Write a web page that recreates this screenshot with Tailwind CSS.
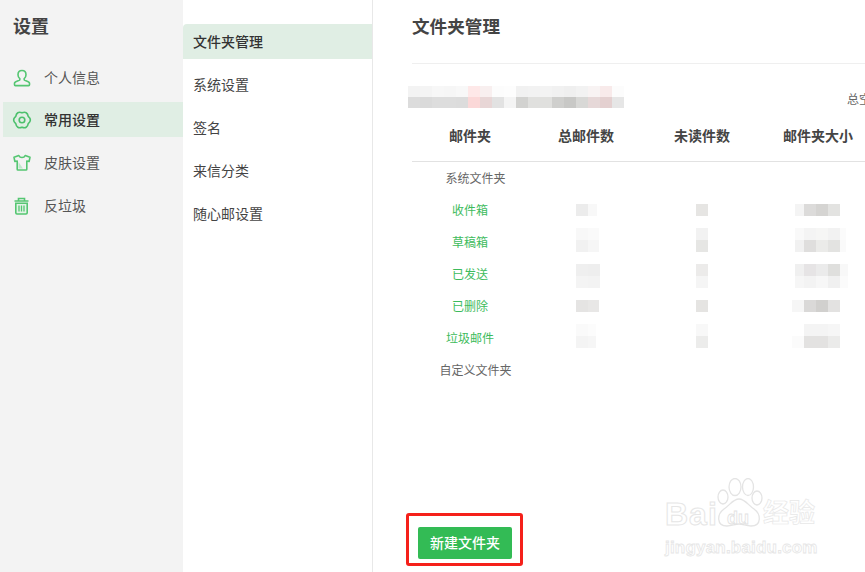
<!DOCTYPE html>
<html lang="zh-CN">
<head>
  <meta charset="UTF-8" />
  <title>设置</title>
  <script src="https://cdn.jsdelivr.net/npm/@tailwindcss/browser@4"></script>
</head>
<body class="h-[572px] w-[865px] overflow-hidden bg-white font-['Liberation_Sans','Noto_Sans_CJK_SC',sans-serif] text-[#333]">
  <div class="relative flex h-full">

    <!-- left nav -->
    <aside class="h-full w-[183px] shrink-0 bg-[#f3f3f3] pl-[3px]">
      <h1 class="h-[60px] pl-[10px] pt-[15px] text-[18px] leading-6 font-bold text-[#444]">设置</h1>
      <ul class="text-[14px] text-[#555]">
        <li class="flex h-[35px] items-center gap-[13px] pl-[10px]">
          <svg class="h-[18px] w-[18px]" viewBox="0 0 18 18" fill="none" stroke="#55c672" stroke-width="1.6"><path d="M9 1.500c-2.500 0-4 1.800-4 4.200 0 1.800.8 3.200 1.800 4v1.300c0 .8-5.300 1.200-5.300 3.300v1.500a.8.8 0 0 0 .8.8h13.400a.8.8 0 0 0 .8-.8V14.300c0-2.100-5.300-2.500-5.300-3.300V9.700c1-.8 1.800-2.200 1.800-4 0-2.400-1.500-4.200-4-4.200z"/></svg>
          <span class="pt-[2px]">个人信息</span>
        </li>
        <li class="mt-[7px] flex h-[35px] items-center gap-[13px] bg-[#e0eee4] pl-[10px] font-medium text-[#333]">
          <svg class="h-[18px] w-[18px] overflow-visible" viewBox="0 0 18 18" fill="none" stroke="#4cc06c" stroke-width="1.6"><path d="M15.240 5.400Q14.250-.09 9 1.800 3.750-.09 2.760 5.400-1.500 9 2.760 12.600 3.750 18.090 9 16.200 14.250 18.090 15.240 12.600 19.500 9 15.240 5.400z"/><circle cx="9" cy="9" r="2.800"/></svg>
          <span class="pt-[2px]">常用设置</span>
        </li>
        <li class="mt-[8px] flex h-[35px] items-center gap-[13px] pl-[10px]">
          <svg class="h-[18px] w-[18px]" viewBox="0 0 18 18" fill="none" stroke="#55c672" stroke-width="1.6"><path d="M5.800 1.500 1 3.300l.9 4.200 2.300-.5v8.200a.8.8 0 0 0 .8.8h8a.8.8 0 0 0 .8-.8V7l2.300.5.900-4.200-4.800-1.800C11 4.200 7 4.200 5.800 1.500z" stroke-linejoin="round"/><path d="M5.500 8v6.500h4.500z" fill="#bfe8cb" stroke="none"/></svg>
          <span class="pt-[2px]">皮肤设置</span>
        </li>
        <li class="mt-[8px] flex h-[35px] items-center gap-[13px] pl-[10px]">
          <svg class="h-[18px] w-[18px]" viewBox="0 0 18 18" fill="none" stroke="#55c672" stroke-width="1.6"><path d="M1.500 4h14M5.500 3.700V1.500h6v2.200"/><path d="M2.800 6.300v9.500a1.200 1.200 0 0 0 1.200 1.200h9a1.200 1.200 0 0 0 1.200-1.200V6.300z" fill="#e3f3e7"/><path d="M6 8.500v6M8.500 8.500v6M11 8.500v6" stroke-width="1.300"/></svg>
          <span class="pt-[2px]">反垃圾</span>
        </li>
      </ul>
    </aside>

    <!-- second nav -->
    <nav class="h-full w-[190px] shrink-0 border-r border-[#e8e8e8] pt-[24px] text-[14px] text-[#444]">
      <div class="flex h-[35px] items-center rounded-tl-[4px] bg-[#e0eee4] pl-[10px] pt-[2px] font-medium text-[#333]">文件夹管理</div>
      <div class="mt-[8px] flex h-[35px] items-center pl-[10px] pt-[2px]">系统设置</div>
      <div class="mt-[8px] flex h-[35px] items-center pl-[10px] pt-[2px]">签名</div>
      <div class="mt-[8px] flex h-[35px] items-center pl-[10px] pt-[2px]">来信分类</div>
      <div class="mt-[8px] flex h-[35px] items-center pl-[10px] pt-[2px]">随心邮设置</div>
    </nav>

    <!-- main -->
    <main class="h-full min-w-0 flex-1 overflow-hidden pl-[39px]">
      <h2 class="h-[64px] border-b border-[#efefef] pt-[15px] text-[17.6px] leading-6 font-bold text-[#444]">文件夹管理</h2>

      <div class="flex h-[64px] w-[471px] items-start justify-between pt-[22px]">
        <div class="-ml-[4px] flex flex-col">
          <div class="flex h-[11px]">
            <i class="h-full w-[12px] bg-[#f3f3f3]"></i><i class="h-full w-[12px] bg-[#f4f4f4]"></i><i class="h-full w-[12px] bg-[#f7f7f7]"></i><i class="h-full w-[12px] bg-[#f6f6f6]"></i><i class="h-full w-[12px] bg-[#f8f8f8]"></i><i class="h-full w-[12px] bg-[#fee8e8]"></i><i class="h-full w-[12px] bg-[#f8efef]"></i><i class="h-full w-[12px] bg-[#fcfcfc]"></i><i class="h-full w-[12px] bg-[#fdfdfd]"></i><i class="h-full w-[12px] bg-[#f1f1f1]"></i><i class="h-full w-[12px] bg-[#f2f2f2]"></i><i class="h-full w-[12px] bg-[#f3f3f3]"></i><i class="h-full w-[12px] bg-[#f1f1f1]"></i><i class="h-full w-[12px] bg-[#efefef]"></i><i class="h-full w-[12px] bg-[#f2f2f2]"></i><i class="h-full w-[12px] bg-[#f8f3f3]"></i><i class="h-full w-[12px] bg-[#f8eaea]"></i><i class="h-full w-[12px] bg-[#fcfcfc]"></i>
          </div>
          <div class="flex h-[11px]">
            <i class="h-full w-[12px] bg-[#dcdcdc]"></i><i class="h-full w-[12px] bg-[#dadada]"></i><i class="h-full w-[12px] bg-[#dddddd]"></i><i class="h-full w-[12px] bg-[#dddddd]"></i><i class="h-full w-[12px] bg-[#dcdcdc]"></i><i class="h-full w-[12px] bg-[#fbd8d8]"></i><i class="h-full w-[12px] bg-[#e8d6d6]"></i><i class="h-full w-[12px] bg-[#e2e2e2]"></i><i class="h-full w-[12px] bg-[#f4f4f4]"></i><i class="h-full w-[12px] bg-[#d2d2d0]"></i><i class="h-full w-[12px] bg-[#e0e0de]"></i><i class="h-full w-[12px] bg-[#e0e0de]"></i><i class="h-full w-[12px] bg-[#cfcfcd]"></i><i class="h-full w-[12px] bg-[#c8c8c6]"></i><i class="h-full w-[12px] bg-[#d8d8d6]"></i><i class="h-full w-[12px] bg-[#e6d8d8]"></i><i class="h-full w-[12px] bg-[#e4d0d0]"></i><i class="h-full w-[12px] bg-[#e6e6e6]"></i>
          </div>
        </div>
        <span class="text-[12px] leading-[28px] whitespace-nowrap text-[#666]">总空间</span>
      </div>

      <!-- table -->
      <div class="w-[464px]">
        <div class="grid h-[34px] grid-cols-[116px_116px_116px_116px] border-b border-[#e2e2e2] text-center text-[14px] leading-[17px] font-bold text-[#444]">
          <div>邮件夹</div><div>总邮件数</div><div>未读件数</div><div>邮件夹大小</div>
        </div>
        <div class="h-[33px] w-[127px] text-center text-[12px] leading-[35px] text-[#666]">系统文件夹</div>

        <div class="grid h-[32px] grid-cols-[116px_116px_116px_116px]">
          <div class="text-center text-[12px] leading-[33px] text-[#3dbb5c]">收件箱</div>
          <div class="flex pl-[48px] pt-[9px]"><i class="h-[12px] w-[12px] bg-[#ececec]"></i><i class="h-[12px] w-[9px] bg-[#f8f8f8]"></i></div>
          <div class="pl-[52px] pt-[9px]"><i class="block h-[12px] w-[12px] bg-[#e6e5e3]"></i></div>
          <div class="flex pl-[35px] pt-[9px]"><i class="h-[12px] w-[9px] bg-[#f4f4f4]"></i><i class="h-[12px] w-[12px] bg-[#dcdbda]"></i><i class="h-[12px] w-[12px] bg-[#d5d4d2]"></i><i class="h-[12px] w-[12px] bg-[#e3e3e1]"></i></div>
        </div>
        <div class="grid h-[32px] grid-cols-[116px_116px_116px_116px]">
          <div class="text-center text-[12px] leading-[33px] text-[#3dbb5c]">草稿箱</div>
          <div class="pl-[48px] pt-[1px]">
            <div class="flex"><i class="h-[12px] w-[12px] bg-[#f8f8f8]"></i><i class="h-[12px] w-[11px] bg-[#fafafa]"></i></div>
            <div class="flex"><i class="h-[12px] w-[12px] bg-[#f1f1f1]"></i><i class="h-[12px] w-[11px] bg-[#f6f6f6]"></i></div>
          </div>
          <div class="pl-[52px] pt-[1px]"><i class="block h-[12px] w-[12px] bg-[#f2f2f2]"></i><i class="block h-[12px] w-[12px] bg-[#e6e6e4]"></i></div>
          <div class="pl-[35px] pt-[1px]">
            <div class="flex"><i class="h-[12px] w-[9px] bg-[#f9f9f9]"></i><i class="h-[12px] w-[12px] bg-[#f4f4f4]"></i><i class="h-[12px] w-[12px] bg-[#f6f6f5]"></i><i class="h-[12px] w-[12px] bg-[#f2f2f2]"></i><i class="h-[12px] w-[6px] bg-[#fbfbfb]"></i></div>
            <div class="flex"><i class="h-[12px] w-[9px] bg-[#f1f1f1]"></i><i class="h-[12px] w-[12px] bg-[#dfdedd]"></i><i class="h-[12px] w-[12px] bg-[#ebebe9]"></i><i class="h-[12px] w-[12px] bg-[#e3e3e1]"></i><i class="h-[12px] w-[6px] bg-[#fafafa]"></i></div>
          </div>
        </div>
        <div class="grid h-[32px] grid-cols-[116px_116px_116px_116px]">
          <div class="text-center text-[12px] leading-[33px] text-[#3dbb5c]">已发送</div>
          <div class="pl-[48px] pt-[5px]">
            <div class="flex"><i class="h-[12px] w-[12px] bg-[#efefef]"></i><i class="h-[12px] w-[12px] bg-[#eeeeee]"></i></div>
            <div class="flex"><i class="h-[12px] w-[12px] bg-[#f4f4f4]"></i><i class="h-[12px] w-[12px] bg-[#f3f3f3]"></i></div>
          </div>
          <div class="pl-[52px] pt-[5px]"><i class="block h-[12px] w-[12px] bg-[#ecebea]"></i><i class="block h-[12px] w-[12px] bg-[#f5f5f5]"></i></div>
          <div class="pl-[35px] pt-[5px]">
            <div class="flex"><i class="h-[12px] w-[9px] bg-[#f0f0f0]"></i><i class="h-[12px] w-[12px] bg-[#e6e4e5]"></i><i class="h-[12px] w-[12px] bg-[#ebebeb]"></i><i class="h-[12px] w-[12px] bg-[#dfdfdd]"></i><i class="h-[12px] w-[8px] bg-[#f8f8f8]"></i></div>
            <div class="flex"><i class="h-[12px] w-[9px] bg-[#f6f6f6]"></i><i class="h-[12px] w-[12px] bg-[#f3f3f3]"></i><i class="h-[12px] w-[12px] bg-[#f7f7f7]"></i><i class="h-[12px] w-[12px] bg-[#f0f0f0]"></i><i class="h-[12px] w-[8px] bg-[#fbfbfb]"></i></div>
          </div>
        </div>
        <div class="grid h-[32px] grid-cols-[116px_116px_116px_116px]">
          <div class="text-center text-[12px] leading-[33px] text-[#3dbb5c]">已删除</div>
          <div class="flex pl-[48px] pt-[9px]"><i class="h-[12px] w-[12px] bg-[#e5e4e3]"></i><i class="h-[12px] w-[11px] bg-[#e8e7e6]"></i></div>
          <div class="pl-[52px] pt-[9px]"><i class="block h-[12px] w-[12px] bg-[#e5e4e2]"></i></div>
          <div class="flex pl-[32px] pt-[9px]"><i class="h-[12px] w-[12px] bg-[#f6f6f6]"></i><i class="h-[12px] w-[12px] bg-[#dad9d8]"></i><i class="h-[12px] w-[12px] bg-[#d1d0ce]"></i><i class="h-[12px] w-[12px] bg-[#e3e2e1]"></i></div>
        </div>
        <div class="grid h-[32px] grid-cols-[116px_116px_116px_116px]">
          <div class="text-center text-[12px] leading-[33px] text-[#3dbb5c]">垃圾邮件</div>
          <div class="pl-[48px] pt-[1px]">
            <div class="flex"><i class="h-[12px] w-[12px] bg-[#fafafa]"></i><i class="h-[12px] w-[8px] bg-[#fcfcfc]"></i></div>
            <div class="flex"><i class="h-[12px] w-[12px] bg-[#f4f4f4]"></i><i class="h-[12px] w-[8px] bg-[#f6f6f6]"></i></div>
          </div>
          <div class="pl-[52px] pt-[1px]"><i class="block h-[12px] w-[12px] bg-[#f8f8f8]"></i><i class="block h-[12px] w-[12px] bg-[#ececeb]"></i></div>
          <div class="pl-[32px] pt-[1px]">
            <div class="flex"><i class="h-[12px] w-[12px] bg-white"></i><i class="h-[12px] w-[12px] bg-[#f4f4f4]"></i><i class="h-[12px] w-[12px] bg-[#f4f4f4]"></i><i class="h-[12px] w-[12px] bg-[#f6f6f6]"></i></div>
            <div class="flex"><i class="h-[12px] w-[12px] bg-[#fbfbfb]"></i><i class="h-[12px] w-[12px] bg-[#e3e2e1]"></i><i class="h-[12px] w-[12px] bg-[#e3e2e1]"></i><i class="h-[12px] w-[12px] bg-[#ebebea]"></i></div>
          </div>
        </div>
        <div class="h-[32px] w-[127px] text-center text-[12px] leading-[33px] text-[#666]">自定义文件夹</div>
      </div>

      <div class="-ml-[6px] mt-[126px] h-[53px] w-[117px] rounded-[3px] border-[3px] border-[#f5201a] pl-[9px] pt-[11px]">
        <button class="block h-[32px] w-[94px] rounded-[2px] bg-[#33bb55] text-[14px] font-medium text-white">新建文件夹</button>
      </div>
    </main>

    <!-- watermark -->
    <div class="absolute left-[662px] top-[478px] h-[88px] w-[170px]">
      <div class="absolute left-[3px] top-[20px] text-[32px] leading-none font-bold tracking-[1px] text-transparent [-webkit-text-stroke:1px_#e6e6e6]">Bai</div>
      <svg class="absolute left-[53px] top-0 h-[50px] w-[48px]" viewBox="0 0 48 50" fill="#fff" stroke="#e4e4e4" stroke-width="1.300">
        <ellipse cx="8" cy="19" rx="5" ry="7"/><ellipse cx="20" cy="9" rx="6" ry="8.500"/><ellipse cx="33" cy="9" rx="5.500" ry="8.500"/><ellipse cx="42" cy="20" rx="5" ry="7"/>
        <path d="M24 21c-6 0-9 6-15 10-7 5-8 17 3 17 5 0 8-2 12-2s7 2 12 2c11 0 10-12 3-17-6-4-9-10-15-10z"/>
      </svg>
      <div class="absolute left-[65px] top-[31px] text-[18px] leading-none font-bold text-transparent [-webkit-text-stroke:0.8px_#e2e2e2]">du</div>
      <div class="absolute left-[101px] top-[22px] text-[26px] leading-none font-bold text-transparent [-webkit-text-stroke:0.7px_#e8e8e8]">经验</div>
      <div class="absolute left-[3px] top-[61px] text-[17px] leading-none font-bold tracking-[0.2px] whitespace-nowrap text-transparent [-webkit-text-stroke:0.8px_#e6e6e6]">jingyan.baidu.com</div>
    </div>
  </div>
</body>
</html>
